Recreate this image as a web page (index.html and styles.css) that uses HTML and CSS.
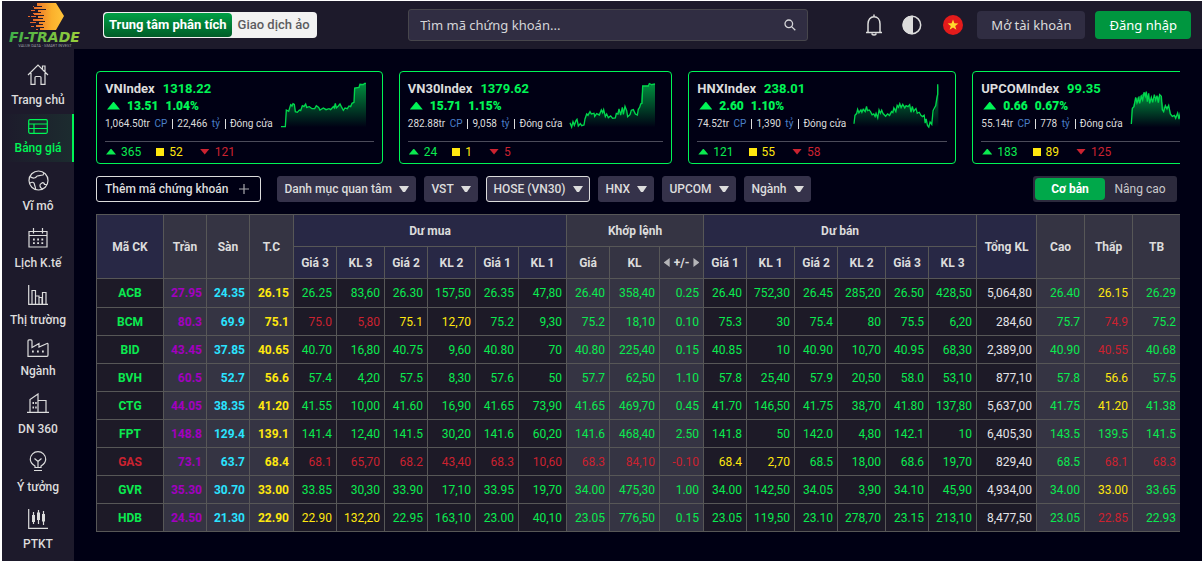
FILE: index.html
```html
<!DOCTYPE html>
<html lang="vi">
<head>
<meta charset="utf-8">
<title>FI-TRADE - Bảng giá</title>
<link rel="stylesheet" href="styles.css">
</head>
<body>
<div class="app">
<header class="topbar">
  <a class="logo" href="#" aria-label="FI-TRADE">
    <svg width="78" height="46" viewBox="0 0 78 46">
      <defs>
        <linearGradient id="hex" x1="0" x2="1"><stop offset="0" stop-color="#e8672a"/><stop offset=".6" stop-color="#fbb02c"/><stop offset="1" stop-color="#ffc43a"/></linearGradient>
        <linearGradient id="word" x1="0" x2="1"><stop offset="0" stop-color="#3fae49"/><stop offset="1" stop-color="#9bcf3c"/></linearGradient>
      </defs>
      <path fill="url(#hex)" d="M30 1H49L57 14L49 28H33V26H37V25H29V23H36V22H32V20H38V19H26V17H36V16H31V14H37V13H27V11H34V10H31V8H39V7H27V5H35V4H30Z"/>
      <path stroke="#e8672a" stroke-width="1" d="M24 8.500h4M21 14.500h2M24 14.500h5M23 20.500h6M26 11.500h2M29 27.500h2M26 4.500h1M24 24.500h3"/>
      <text class="logo-word" x="2" y="40" fill="url(#word)">FI-TRADE</text>
      <text class="logo-tag" x="38" y="45" text-anchor="middle">VALUE DATA - SMART INVEST</text>
    </svg>
  </a>
  <div class="mode">
    <button class="mode-btn is-on" type="button">Trung tâm phân tích</button>
    <button class="mode-btn" type="button">Giao dịch ảo</button>
  </div>
  <form class="search">
    <input type="text" aria-label="Tìm mã chứng khoán" placeholder="Tìm mã chứng khoán...">
    <button type="button" aria-label="Tìm"><svg width="12" height="12" viewBox="0 0 12 12" fill="none" stroke="#d5d5d8" stroke-width="1.300"><circle cx="4.800" cy="4.800" r="3.800"/><path d="M7.600 7.600L11.300 11.300"/></svg></button>
  </form>
  <div class="tools">
    <button class="icon-btn" type="button" aria-label="Thông báo"><svg width="20" height="22" viewBox="0 0 20 22" fill="none" stroke="#dcdcdc" stroke-width="1.500"><path d="M10 0.500V2.500M2 18.500H18M4 18V10C4 5.500 6.500 2.800 10 2.800S16 5.500 16 10V18M8 19.500C8 21.500 12 21.500 12 19.500"/></svg></button>
    <button class="icon-btn" type="button" aria-label="Giao diện"><svg width="20" height="20" viewBox="0 0 20 20"><circle cx="10" cy="10" r="8.700" fill="none" stroke="#dcdcdc" stroke-width="1.500"/><path fill="#dcdcdc" d="M11 .8A9.300 9.300 0 1 0 11 19.200Z"/></svg></button>
    <button class="icon-btn" type="button" aria-label="Tiếng Việt"><svg width="20" height="20" viewBox="0 0 20 20"><circle cx="10" cy="10" r="10" fill="#e31b1b"/><path fill="#ffdb2c" d="M10 4.500L11.400 8.300L15.400 8.400L12.200 10.900L13.400 14.800L10 12.500L6.600 14.800L7.800 10.900L4.600 8.400L8.600 8.300Z"/></svg></button>
  </div>
  <div class="auth">
    <button class="btn" type="button">Mở tài khoản</button>
    <button class="btn btn-go" type="button">Đăng nhập</button>
  </div>
</header>
<div class="body">
<nav class="side">
  <a href="#"><svg width="22" height="21" viewBox="0 0 22 21"><path d="M1 11L11 1L21 11M4 9V20.300H8V13.500Q8 12.500 9 12.500H13Q14 12.500 14 13.500V20.300H18V9M15.500 5V2H18V7.500"/></svg><span>Trang chủ</span></a>
  <a href="#" class="is-on compact"><svg width="20" height="15" viewBox="0 0 20 15"><rect x=".7" y=".7" width="18.600" height="13.600" rx="1.200"/><path d="M1 5H19M1 9.500H19M6 5V14"/></svg><span>Bảng giá</span></a>
  <a href="#"><svg width="21" height="21" viewBox="0 0 21 21"><circle cx="10.500" cy="10.500" r="9.500"/><path d="M2 6.500C5 9 8 8 8.500 6.500C9 5 12 6 15 5L16 3M1.500 13.500C4 11.500 6.500 12 6.500 14.500C6.500 16 8 17 7.500 19.500M15 19C11 18 11.500 13.500 13.500 13.500C14.500 12 16.500 13 16.500 14.500H19"/></svg><span>Vĩ mô</span></a>
  <a href="#"><svg width="20" height="20" viewBox="0 0 20 20"><path d="M1 3.500H19V19H1ZM1 7.500H19M5.500 0V5.500M14.500 0V5.500"/><path stroke-width="1.800" d="M5 11.500h1.800M9.200 11.500h1.800M13.400 11.500h1.800M5 15.200h1.800M9.200 15.200h1.800M13.400 15.200h1.800"/></svg><span>Lịch K.tế</span></a>
  <a href="#"><svg width="20" height="20" viewBox="0 0 20 20"><path d="M.7 0V19.300H20M4 19V5.500H7.500V19M7.500 11H11V19M11 12.500H14V19M14.500 19V7.500H18V19"/></svg><span>Thị trường</span></a>
  <a href="#" class="compact"><svg width="22" height="18" viewBox="0 0 22 18"><path d="M1 17.300V2Q1 .8 2 .8H4Q5 .8 5 2V8.500L12 4.500V8L20 4.500Q21 4.300 21 5V16Q21 17.300 20 17.300Z"/><path stroke-width="1.800" d="M5 12.500h1.800M10 12.500h1.800M15 12.500h1.800"/></svg><span>Ngành</span></a>
  <a href="#"><svg width="22" height="21" viewBox="0 0 22 21"><path d="M0 19.300H22M3 19V6.500L11 1V19M11 7.500H19V19"/><path stroke-width="1.800" d="M5.500 10h1.500M8.200 10h1.500M5.500 14.500h1.500M8.200 14.500h1.500"/></svg><span>DN 360</span></a>
  <a href="#"><svg width="18" height="21" viewBox="0 0 18 21"><path d="M6 16.500V15C3.500 13.500 1.300 11 1.300 8.300A7.700 7.700 0 0 1 16.700 8.300C16.700 11 14.500 13.500 12 15V16.500ZM9 16V10.500M5.500 7.500L9 10.500L12.500 7.500M5 19.500H13"/></svg><span>Ý tưởng</span></a>
  <a href="#"><svg width="20" height="20" viewBox="0 0 20 20"><path d="M.7 0V19.300H20M5.500 3V15M10.500 1V15M15.500 2V16"/><path stroke-width="3" d="M5.500 6V13M10.500 3.500V11M15.500 5V12.500"/></svg><span>PTKT</span></a>
</nav>
<main class="main">
<svg width="0" height="0" class="defs"><defs><linearGradient id="area" x1="0" y1="0" x2="0" y2="1"><stop offset="0" stop-color="#00c04c"/><stop offset="1" stop-color="#00c04c" stop-opacity="0"/></linearGradient></defs></svg>
<section class="cards">
  <article class="card">
    <div class="card-top">
      <div>
        <div class="name"><b>VNIndex</b><strong>1318.22</strong></div>
        <div class="chg"><i class="up big"></i><strong>13.51</strong><strong>1.04%</strong></div>
        <div class="vol"><span>1,064.50tr <em>CP</em></span><span>22,466 <em>tỷ</em></span><span>Đóng cửa</span></div>
      </div>
      <svg class="spark" viewBox="591 57 255 135"><path class="area" d="M591 190L592 188H604L607 138L614 142L620 122L629 119L637 145L646 141L655 125L665 120L672 130L692 134L697 125L708 138L718 132L735 137L748 128L754 118L757 132L768 120L778 139L790 134L800 122L810 115L812 72L825 70L828 61L846 58V190Z"/><path class="line" d="M591 188H604L607 138L614 142L620 122L624 126L627 119L631 121L634 143L640 145L646 138L650 140L655 125L660 128L665 120L668 130L676 128L684 134L692 134L697 125L704 130L708 138L718 132L726 137L735 134L740 137L748 128L751 132L754 118L757 132L763 126L768 120L772 128L778 139L783 132L790 134L795 126L800 128L804 118L810 115L812 72L825 70L828 61L838 62L842 58H846"/></svg>
    </div>
    <div class="counts"><span class="g"><i class="up"></i>365</span><span class="y"><i class="sq"></i>52</span><span class="r"><i class="down"></i>121</span></div>
  </article>
  <article class="card">
    <div class="card-top">
      <div>
        <div class="name"><b>VN30Index</b><strong>1379.62</strong></div>
        <div class="chg"><i class="up big"></i><strong>15.71</strong><strong>1.15%</strong></div>
        <div class="vol"><span>282.88tr <em>CP</em></span><span>9,058 <em>tỷ</em></span><span>Đóng cửa</span></div>
      </div>
      <svg class="spark" viewBox="540 57 255 135"><path class="area" d="M540 188L550 175L560 170L565 186L582 183L590 150L600 143L612 156L640 138L650 160L675 162L684 140L690 150L705 128L715 158L728 138L742 152L752 120L758 66L780 64L795 60V190H540Z"/><path class="line" d="M540 176L545 189L549 173L553 184L558 170L561 166L565 186L571 179L575 185L582 183L585 165L590 150L594 154L600 143L604 150L612 148L614 157L620 149L628 153L634 138L638 146L641 137L646 158L650 150L655 161L662 156L668 163L676 162L679 148L684 150L687 135L692 153L697 130L700 151L705 127L710 140L713 158L720 152L724 139L730 137L736 150L742 153L745 136L749 130L752 120L756 118L758 66H775L778 59L784 62L795 60"/></svg>
    </div>
    <div class="counts"><span class="g"><i class="up"></i>24</span><span class="y"><i class="sq"></i>1</span><span class="r"><i class="down"></i>5</span></div>
  </article>
  <article class="card">
    <div class="card-top">
      <div>
        <div class="name"><b>HNXIndex</b><strong>238.01</strong></div>
        <div class="chg"><i class="up big"></i><strong>2.60</strong><strong>1.10%</strong></div>
        <div class="vol"><span>74.52tr <em>CP</em></span><span>1,390 <em>tỷ</em></span><span>Đóng cửa</span></div>
      </div>
      <svg class="spark" viewBox="522 57 258 135"><path class="area" d="M522 190V155L535 140L560 132L575 150L595 158L605 140L620 155L640 138L660 123L690 127L710 145L730 160L750 190H755L760 165L768 135L778 62V190Z"/><path class="line" d="M522 180L525 154L530 149L533 136L537 147L543 138L546 145L550 136L556 143L560 127L563 140L568 138L572 143L577 153L582 150L586 158L589 148L594 162L598 138L602 148L606 139L610 149L618 157L624 150L630 155L636 143L640 146L643 132L649 143L653 124L657 130L661 119L665 131L670 121L676 132L680 125L686 128L691 122L695 145L699 127L703 142L710 134L714 148L720 145L725 154L730 158L735 154L738 178L741 165L745 185L749 190L753 175L758 182L762 140L766 132L770 125L773 105L776 90V60"/></svg>
    </div>
    <div class="counts"><span class="g"><i class="up"></i>121</span><span class="y"><i class="sq"></i>55</span><span class="r"><i class="down"></i>58</span></div>
  </article>
  <article class="card">
    <div class="card-top">
      <div>
        <div class="name"><b>UPCOMIndex</b><strong>99.35</strong></div>
        <div class="chg"><i class="up big"></i><strong>0.66</strong><strong>0.67%</strong></div>
        <div class="vol"><span>55.14tr <em>CP</em></span><span>778 <em>tỷ</em></span><span>Đóng cửa</span></div>
      </div>
      <svg class="spark" viewBox="542 57 255 135"><path class="area" d="M543 190V140L555 105L585 85L600 110L630 95L640 130L655 125L665 155L690 152L797 150V190Z"/><path class="line" d="M543 180L546 133L551 128L556 100L560 117L565 103L568 118L573 98L577 108L581 85L585 97L588 83L591 113L595 88L598 118L603 100L607 115L612 92L616 108L620 95L624 116L628 92L633 97L636 137L640 143L645 125L650 135L655 124L660 150L666 157L672 154L676 163L682 147L686 165L690 147L697 160L710 150L725 158L745 140L770 150L797 130"/></svg>
    </div>
    <div class="counts"><span class="g"><i class="up"></i>183</span><span class="y"><i class="sq"></i>89</span><span class="r"><i class="down"></i>125</span></div>
  </article>
</section>
<section class="filters">
  <button class="add" type="button">Thêm mã chứng khoán<svg width="10" height="10" viewBox="0 0 10 10" stroke="#a9a9ae" stroke-width="1.200"><path d="M5 0V10M0 5H10"/></svg></button>
  <select aria-label="Danh mục"><option>Danh mục quan tâm</option></select>
  <select aria-label="VST"><option>VST</option></select>
  <select aria-label="HOSE" class="is-on"><option>HOSE (VN30)</option></select>
  <select aria-label="HNX"><option>HNX</option></select>
  <select aria-label="UPCOM"><option>UPCOM</option></select>
  <select aria-label="Ngành"><option>Ngành</option></select>
  <div class="level"><button class="is-on" type="button">Cơ bản</button><button type="button">Nâng cao</button></div>
</section>
<table class="board">
<colgroup><col class="w67"><col class="w43"><col class="w43"><col class="w44"><col class="w43"><col class="w48"><col class="w43"><col class="w48"><col class="w43"><col class="w48"><col class="w43"><col class="w50"><col class="w44"><col class="w43"><col class="w48"><col class="w43"><col class="w48"><col class="w43"><col class="w48"><col class="w60"><col class="w48"><col class="w48"><col class="w48"></colgroup>
<thead>
<tr><th rowspan="2">Mã CK</th><th rowspan="2" class="s">Trần</th><th rowspan="2" class="s">Sàn</th><th rowspan="2" class="s">T.C</th><th colspan="6">Dư mua</th><th colspan="3" class="s">Khớp lệnh</th><th colspan="6">Dư bán</th><th rowspan="2">Tổng KL</th><th rowspan="2" class="s">Cao</th><th rowspan="2" class="s">Thấp</th><th rowspan="2" class="s">TB</th></tr>
<tr><th>Giá 3</th><th>KL 3</th><th>Giá 2</th><th>KL 2</th><th>Giá 1</th><th>KL 1</th><th class="s">Giá</th><th class="s">KL</th><th class="s"><div class="pm"><i class="prev"></i>+/-<i class="next"></i></div></th><th>Giá 1</th><th>KL 1</th><th>Giá 2</th><th>KL 2</th><th>Giá 3</th><th>KL 3</th></tr>
</thead>
<tbody>
<tr><th>ACB</th><td>27.95</td><td>24.35</td><td>26.15</td><td>26.25</td><td>83,60</td><td>26.30</td><td>157,50</td><td>26.35</td><td>47,80</td><td>26.40</td><td>358,40</td><td>0.25</td><td>26.40</td><td>752,30</td><td>26.45</td><td>285,20</td><td>26.50</td><td>428,50</td><td>5,064,80</td><td>26.40</td><td class="y">26.15</td><td>26.29</td></tr>
<tr><th>BCM</th><td>80.3</td><td>69.9</td><td>75.1</td><td class="r">75.0</td><td class="r">5,80</td><td class="y">75.1</td><td class="y">12,70</td><td>75.2</td><td>9,30</td><td>75.2</td><td>18,10</td><td>0.10</td><td>75.3</td><td>30</td><td>75.4</td><td>80</td><td>75.5</td><td>6,20</td><td>284,60</td><td>75.7</td><td class="r">74.9</td><td>75.2</td></tr>
<tr><th>BID</th><td>43.45</td><td>37.85</td><td>40.65</td><td>40.70</td><td>16,80</td><td>40.75</td><td>9,60</td><td>40.80</td><td>70</td><td>40.80</td><td>225,40</td><td>0.15</td><td>40.85</td><td>10</td><td>40.90</td><td>10,70</td><td>40.95</td><td>68,30</td><td>2,389,00</td><td>40.90</td><td class="r">40.55</td><td>40.68</td></tr>
<tr><th>BVH</th><td>60.5</td><td>52.7</td><td>56.6</td><td>57.4</td><td>4,20</td><td>57.5</td><td>8,30</td><td>57.6</td><td>50</td><td>57.7</td><td>62,50</td><td>1.10</td><td>57.8</td><td>25,40</td><td>57.9</td><td>20,50</td><td>58.0</td><td>53,10</td><td>877,10</td><td>57.8</td><td class="y">56.6</td><td>57.5</td></tr>
<tr><th>CTG</th><td>44.05</td><td>38.35</td><td>41.20</td><td>41.55</td><td>10,00</td><td>41.60</td><td>16,90</td><td>41.65</td><td>73,90</td><td>41.65</td><td>469,70</td><td>0.45</td><td>41.70</td><td>146,50</td><td>41.75</td><td>38,70</td><td>41.80</td><td>137,80</td><td>5,637,00</td><td>41.75</td><td class="y">41.20</td><td>41.38</td></tr>
<tr><th>FPT</th><td>148.8</td><td>129.4</td><td>139.1</td><td>141.4</td><td>12,40</td><td>141.5</td><td>30,20</td><td>141.6</td><td>60,20</td><td>141.6</td><td>468,40</td><td>2.50</td><td>141.8</td><td>50</td><td>142.0</td><td>4,80</td><td>142.1</td><td>10</td><td>6,405,30</td><td>143.5</td><td>139.5</td><td>141.5</td></tr>
<tr><th class="r">GAS</th><td>73.1</td><td>63.7</td><td>68.4</td><td class="r">68.1</td><td class="r">65,70</td><td class="r">68.2</td><td class="r">43,40</td><td class="r">68.3</td><td class="r">10,60</td><td class="r">68.3</td><td class="r">84,10</td><td class="r">-0.10</td><td class="y">68.4</td><td class="y">2,70</td><td>68.5</td><td>18,00</td><td>68.6</td><td>19,70</td><td>829,40</td><td>68.5</td><td class="r">68.1</td><td class="r">68.3</td></tr>
<tr><th>GVR</th><td>35.30</td><td>30.70</td><td>33.00</td><td>33.85</td><td>30,30</td><td>33.90</td><td>17,10</td><td>33.95</td><td>19,70</td><td>34.00</td><td>475,30</td><td>1.00</td><td>34.00</td><td>142,50</td><td>34.05</td><td>3,90</td><td>34.10</td><td>45,90</td><td>4,934,00</td><td>34.00</td><td class="y">33.00</td><td>33.65</td></tr>
<tr><th>HDB</th><td>24.50</td><td>21.30</td><td>22.90</td><td class="y">22.90</td><td class="y">132,20</td><td>22.95</td><td>163,10</td><td>23.00</td><td>40,10</td><td>23.05</td><td>776,50</td><td>0.15</td><td>23.05</td><td>119,50</td><td>23.10</td><td>278,70</td><td>23.15</td><td>213,10</td><td>8,477,50</td><td>23.05</td><td class="r">22.85</td><td>22.93</td></tr>
</tbody>
</table>
</main>
</div>
</div>
</body>
</html>
```
FILE: styles.css
```css
* { box-sizing: border-box; }
html, body { height: 100%; }
body {
  margin: 0;
  padding: 1px 2px 3px;
  background: #fff;
  color: #dcdcdc;
  font: 500 12px/16px Roboto, sans-serif;
}
button, input, select { font: inherit; color: inherit; border: 0; padding: 0; margin: 0; background: none; }
button { cursor: pointer; }
a { color: inherit; text-decoration: none; }
i { display: inline-block; flex: none; }

.app { height: 100%; display: flex; flex-direction: column; background: #000014; overflow: hidden; }

.topbar { flex: none; height: 48px; display: flex; align-items: center; padding: 0 11px 0 5px; background: #1d1a2b; }
.logo { width: 96px; height: 46px; flex: none; }
.logo svg { display: block; overflow: visible; }
.logo-word { font: italic bold 14px "DejaVu Sans", sans-serif; }
.logo-tag { font: 4px Roboto, sans-serif; fill: #9a9aa2; }

.mode { display: flex; padding: 1px; height: 26px; border-radius: 4px; background: #f2f2f2; }
.mode-btn { padding: 0 6px; border-radius: 4px; font-size: 13px; color: #5c5c60; white-space: nowrap; }
.mode-btn.is-on { padding: 0 5px; color: #fff; font-weight: 700; background: linear-gradient(#00a045, #005c28); }

.search { flex: 0 1 400px; height: 32px; margin-left: auto; display: flex; align-items: center; padding: 0 11px; background: #302d42; border: 1px solid #47464c; border-radius: 3px; font: 13px/18px "Noto Sans", sans-serif; }
.search input { flex: 1; min-width: 0; outline: 0; }
.search input::placeholder { color: #d5d5d8; opacity: 1; }
.search button { display: flex; }

.tools { display: flex; align-items: center; gap: 18px; margin-left: 56px; }
.icon-btn { display: flex; }
.icon-btn:last-child { margin-left: 3px; }
.auth { display: flex; gap: 10px; margin-left: 14px; font: 13px/18px "Noto Sans", sans-serif; }
.btn { height: 28px; padding: 0 14px; border-radius: 4px; background: #302d42; white-space: nowrap; }
.btn-go { background: #00963f; color: #fff; }

.body { flex: 1; min-height: 0; display: flex; }
.side { flex: none; width: 72px; padding-top: 7px; background: #1d1a2b; }
.side a { display: flex; flex-direction: column; align-items: center; gap: 7px; padding: 8px 0 6px; white-space: nowrap; }
.side a.compact { gap: 6px; padding-top: 5px; }
.side svg { display: block; fill: none; stroke: currentColor; stroke-width: 1.2; }
.side a.is-on { color: #00f556; background: linear-gradient(90deg, #1d1a2b, #1c2c2f); box-shadow: inset -2px 0 #00f556; }

.main { flex: 1; min-width: 0; padding: 22px 22px 0; }
.defs { position: absolute; }

.cards { display: flex; gap: 16px; overflow: hidden; }
.card { flex: none; height: 93px; padding: 8px 8px 0; border: 1px solid #00f556; border-radius: 4px; }
.card-top { display: flex; gap: 8px; height: 61px; padding-right: 8px; }
.name, .chg, .vol { display: flex; align-items: center; white-space: nowrap; }
.name { gap: 8px; height: 17px; font-size: 13px; }
.name b { font-weight: 700; }
.name strong, .chg { color: #00f556; font-weight: 700; }
.chg { gap: 7px; height: 17px; padding-left: 2px; }
.vol { height: 20px; font-size: 10px; line-height: 10px; font-weight: 400; }
.vol span + span { margin-left: 5px; padding-left: 4px; border-left: 1px solid #dcdcdc; }
.vol em { font-style: normal; color: #4a7fc8; margin-left: 2px; }
.spark { width: 85px; height: 45px; margin-top: 3px; overflow: visible; }
.area { fill: url(#area); opacity: .75; }
.line { fill: none; stroke: #00d64c; stroke-width: 4; }
.counts { display: flex; gap: 15px; height: 20px; align-items: center; padding-left: 1px; border-top: 1px solid #4b4b5a; font-weight: 400; }
.counts span { display: flex; align-items: center; gap: 5px; }
.counts .r { margin-left: 2px; }
.up, .down { width: 10px; height: 6px; background: currentColor; }
.up { clip-path: polygon(50% 0, 100% 100%, 0 100%); }
.up.big { width: 13px; height: 8px; }
.down { clip-path: polygon(0 0, 100% 0, 50% 100%); }
.sq { width: 8px; height: 8px; background: currentColor; }
.g { color: #0bea50; }
.y { color: #ffe70f; }
.r { color: #cb2230; }
.board tbody th.r { color: #cb2230; }

.filters { display: flex; gap: 8px; margin: 12px 0; padding-right: 3px; }
.filters > * { height: 26px; border-radius: 3px; white-space: nowrap; }
.add { display: flex; align-items: center; gap: 11px; padding: 0 11px 0 8px; margin-right: 8px; border: 1px solid #dcdcdc; }
.filters select {
  appearance: none;
  padding: 0 23px 0 6px;
  border: 1px solid #35324a;
  background: #35324a url("data:image/svg+xml,%3Csvg xmlns='http://www.w3.org/2000/svg' width='10' height='6'%3E%3Cpath fill='%23dcdcdc' d='M0 0H10L6 6H4Z'/%3E%3C/svg%3E") no-repeat right 6px center;
}
.filters select.is-on { border-color: #dcdcdc; }
.level { display: flex; margin-left: auto; padding: 2px; background: #2c2a3d; }
.level button { width: 70px; border-radius: 4px; font-weight: 400; color: #c9c9cc; }
.level .is-on { background: #00a84a; color: #fff; font-weight: 700; }

.board { width: 100%; table-layout: fixed; border-collapse: separate; border-spacing: 0; border-bottom: 1px solid #575757; }
.board th, .board td { height: 28px; padding: 0; border: solid #575757; border-width: 1px 0 0 1px; white-space: nowrap; }
.board thead th { height: 32px; background: #282845; font-weight: 700; }
.board thead th.s { background: #353443; }
.board tbody { background: #1d1a27; color: #0bea50; }
.board tbody th { font-weight: 700; }
.board tbody tr:first-child > * { height: 29px; }
.board td { padding-right: 4px; text-align: right; font-weight: 400; }
.board td:nth-child(-n+4), .board td:nth-child(n+11):nth-child(-n+13), .board td:nth-child(n+21) { background: #353443; }
.board td:nth-child(-n+4) { font-weight: 700; }
.board td:nth-child(2) { color: #a300c0; }
.board td:nth-child(3) { color: #2ae3ff; }
.board td:nth-child(4) { color: #ffe70f; }
.board td:nth-child(20) { color: #e4e4e8; }
.pm { display: flex; align-items: center; justify-content: center; gap: 4px; }
.prev, .next { width: 6px; height: 9px; background: #b5b5b8; }
.prev { clip-path: polygon(100% 0, 100% 100%, 0 50%); }
.next { clip-path: polygon(0 0, 100% 50%, 0 100%); }
.w43 { width: 43px; }
.w44 { width: 44px; }
.w48 { width: 48px; }
.w50 { width: 50px; }
.w60 { width: 60px; }
.w67 { width: 67px; }
```
